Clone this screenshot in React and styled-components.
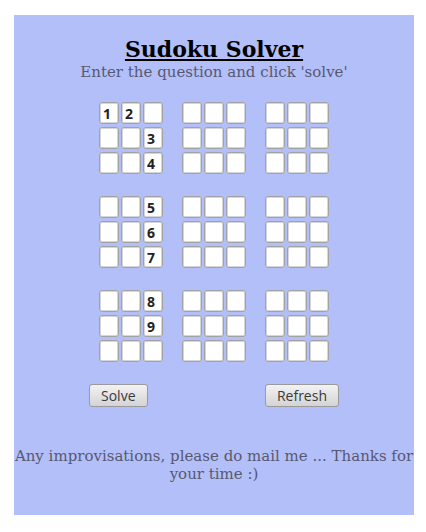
import { useState } from "react";
import styled, { createGlobalStyle } from "styled-components";

const GlobalStyle = createGlobalStyle`
  body {
    margin: 0;
    padding: 15px 0 0 14px;
    background: #fff;
    font-family: "DejaVu Serif", serif;
  }
`;

const Panel = styled.div`
  width: 400px;
  height: 500px;
  box-sizing: border-box;
  padding-top: 21px;
  background-color: #b3bff9;
  display: flex;
  flex-direction: column;
  align-items: center;
`;

const Title = styled.h1`
  margin: 0;
  font-size: 22px;
  line-height: 26px;
  font-weight: 700;
  text-decoration: underline;
  color: #000;
`;

const Subtitle = styled.p`
  margin: 0;
  font-size: 15px;
  line-height: 20px;
  color: #585870;
`;

const Board = styled.div`
  margin-top: 20px;
  display: flex;
  flex-direction: column;
  gap: 22px;
`;

const BlockRow = styled.div`
  display: flex;
  gap: 19px;
`;

const Block = styled.div`
  display: grid;
  grid-template-columns: repeat(3, 20px);
  grid-auto-rows: 22px;
  column-gap: 2px;
  row-gap: 3px;
`;

const Cell = styled.input`
  width: 20px;
  height: 22px;
  box-sizing: border-box;
  margin: 0;
  padding: 0 0 0 3px;
  border: 1px solid #a2a2a2;
  border-radius: 3px;
  box-shadow: inset 0 0 0 1px #d6d6d6;
  background: #fff;
  font-family: "Open Sans", sans-serif;
  font-weight: 700;
  font-size: 14px;
  color: #222;
  outline: none;
`;

const Actions = styled.div`
  width: 250px;
  margin-top: 22px;
  display: flex;
  justify-content: space-between;
`;

const Button = styled.button`
  height: 23px;
  padding: 0 11px;
  border: 1px solid #9a9a9a;
  border-radius: 3px;
  background: linear-gradient(#f2f2f2, #d4d4d4);
  font-family: "Open Sans", sans-serif;
  font-size: 14px;
  color: #3a3a3a;
  cursor: pointer;
`;

const Footer = styled.p`
  margin: 40px 0 0;
  font-size: 15px;
  line-height: 18px;
  text-align: center;
  color: #585870;
`;

const START = (() => {
  const b = Array.from({ length: 9 }, () => Array(9).fill(""));
  b[0][0] = "1";
  b[0][1] = "2";
  b[1][2] = "3";
  b[2][2] = "4";
  b[3][2] = "5";
  b[4][2] = "6";
  b[5][2] = "7";
  b[6][2] = "8";
  b[7][2] = "9";
  return b;
})();

function canPlace(b, r, c, v) {
  for (let i = 0; i < 9; i++) {
    if (b[r][i] === v || b[i][c] === v) return false;
  }
  const br = r - (r % 3);
  const bc = c - (c % 3);
  for (let i = 0; i < 3; i++)
    for (let j = 0; j < 3; j++) if (b[br + i][bc + j] === v) return false;
  return true;
}

function solve(b) {
  for (let r = 0; r < 9; r++) {
    for (let c = 0; c < 9; c++) {
      if (b[r][c] !== "") continue;
      for (let n = 1; n <= 9; n++) {
        const v = String(n);
        if (canPlace(b, r, c, v)) {
          b[r][c] = v;
          if (solve(b)) return true;
          b[r][c] = "";
        }
      }
      return false;
    }
  }
  return true;
}

function App() {
  const [board, setBoard] = useState(START);

  function setCell(r, c, v) {
    const next = board.map((row) => row.slice());
    next[r][c] = v.replace(/[^1-9]/g, "").slice(-1);
    setBoard(next);
  }

  function handleSolve() {
    const next = board.map((row) => row.slice());
    if (solve(next)) setBoard(next);
  }

  return (
    <>
      <GlobalStyle />
      <Panel>
        <Title>Sudoku Solver</Title>
        <Subtitle>Enter the question and click 'solve'</Subtitle>
        <Board>
          {[0, 1, 2].map((bandRow) => (
            <BlockRow key={bandRow}>
              {[0, 1, 2].map((bandCol) => (
                <Block key={bandCol}>
                  {[0, 1, 2].map((i) =>
                    [0, 1, 2].map((j) => {
                      const r = bandRow * 3 + i;
                      const c = bandCol * 3 + j;
                      return (
                        <Cell
                          key={`${r}-${c}`}
                          value={board[r][c]}
                          onChange={(e) => setCell(r, c, e.target.value)}
                        />
                      );
                    })
                  )}
                </Block>
              ))}
            </BlockRow>
          ))}
        </Board>
        <Actions>
          <Button onClick={handleSolve}>Solve</Button>
          <Button onClick={() => setBoard(START)}>Refresh</Button>
        </Actions>
        <Footer>
          Any improvisations, please do mail me ... Thanks for your time :)
        </Footer>
      </Panel>
    </>
  );
}

export default App;
